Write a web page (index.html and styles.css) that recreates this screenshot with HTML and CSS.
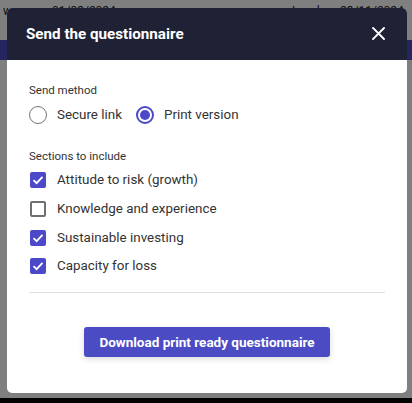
FILE: index.html
```html
<!DOCTYPE html>
<html lang="en">
<head>
<meta charset="utf-8">
<title>Send the questionnaire</title>
<link rel="stylesheet" href="styles.css">
</head>
<body>
<div class="page">
  <div class="bg-row">
    <span class="bg-cell c1">w</span>
    <span class="bg-cell c2">01/03/2024</span>
    <span class="bg-cell c3">Level</span>
    <span class="bg-cell c4">23/11/2024</span>
  </div>
  <div class="bg-bar"></div>
</div>
<div class="overlay"></div>
<div class="bottom-strip"></div>
<div class="modal" role="dialog" aria-labelledby="dlg-title">
  <div class="modal-header">
    <h2 id="dlg-title" class="modal-title">Send the questionnaire</h2>
    <button class="close-btn" aria-label="Close">
      <svg width="13" height="13" viewBox="0 0 13 13"><path d="M1 1L12 12M12 1L1 12" stroke="#ffffff" stroke-width="1.9" stroke-linecap="square"/></svg>
    </button>
  </div>
  <div class="modal-body">
    <div class="field-label">Send method</div>
    <div class="radio-row">
      <label class="radio"><span class="radio-dot"></span><span>Secure link</span></label>
      <label class="radio checked"><span class="radio-dot"></span><span>Print version</span></label>
    </div>
    <div class="field-label sections">Sections to include</div>
    <div class="checks">
      <label class="check checked"><span class="box"><svg width="12" height="10" viewBox="0 0 12 10"><path d="M1.5 5.2L4.6 8.2L10.5 1.8" fill="none" stroke="#fff" stroke-width="1.8"/></svg></span><span>Attitude to risk (growth)</span></label>
      <label class="check"><span class="box"></span><span>Knowledge and experience</span></label>
      <label class="check checked"><span class="box"><svg width="12" height="10" viewBox="0 0 12 10"><path d="M1.5 5.2L4.6 8.2L10.5 1.8" fill="none" stroke="#fff" stroke-width="1.8"/></svg></span><span>Sustainable investing</span></label>
      <label class="check checked"><span class="box"><svg width="12" height="10" viewBox="0 0 12 10"><path d="M1.5 5.2L4.6 8.2L10.5 1.8" fill="none" stroke="#fff" stroke-width="1.8"/></svg></span><span>Capacity for loss</span></label>
    </div>
    <hr class="divider">
    <div class="actions">
      <button class="primary-btn">Download print ready questionnaire</button>
    </div>
  </div>
</div>
</body>
</html>
```
FILE: styles.css
```css
* { box-sizing: border-box; }
html, body { margin: 0; padding: 0; }
body {
  width: 412px;
  height: 403px;
  overflow: hidden;
  position: relative;
  font-family: Roboto, "Liberation Sans", Arial, sans-serif;
  background: #ffffff;
}
.page {
  width: 412px;
  height: 403px;
}
.bg-row {
  height: 40px;
  font-size: 12px;
  color: #222;
  position: relative;
}
.bg-cell { position: absolute; top: 4px; }
.c1 { left: 3px; }
.c2 { left: 52px; }
.c3 { left: 292px; }
.c4 { left: 340px; }
.bg-bar {
  height: 20px;
  background: #4a4ac0;
}
.overlay {
  position: absolute;
  inset: 0;
  background: rgba(0, 0, 0, 0.5);
}
.bottom-strip {
  position: absolute;
  left: 0;
  right: 0;
  bottom: 0;
  height: 5px;
  background: #000;
}
.modal {
  position: absolute;
  left: 7px;
  top: 8px;
  width: 400px;
  height: 385px;
  background: #ffffff;
  border-radius: 5px;
  overflow: hidden;
  display: flex;
  flex-direction: column;
}
.modal-header {
  height: 52px;
  flex: none;
  background: #1f2235;
  display: flex;
  align-items: center;
  justify-content: space-between;
  padding: 0 22px 0 19px;
}
.modal-title {
  margin: 0;
  color: #ffffff;
  font-size: 15.2px;
  font-weight: 700;
}
.close-btn {
  background: none;
  border: 0;
  padding: 0;
  width: 13px;
  height: 13px;
  display: flex;
  cursor: pointer;
  margin-top: -2px;
}
.modal-body {
  padding: 22px 22px 0 22px;
  display: flex;
  flex-direction: column;
}
.field-label {
  font-size: 11.5px;
  line-height: 16px;
  color: #333333;
}
.field-label.sections { margin-top: 23px; }
.radio-row {
  display: flex;
  gap: 14px;
  margin-top: 7px;
}
.radio, .check {
  display: flex;
  align-items: center;
  gap: 10px;
  font-size: 13.4px;
  color: #333333;
  line-height: 20px;
}
.radio-dot {
  width: 18px;
  height: 18px;
  border-radius: 50%;
  border: 1.5px solid #757575;
  display: flex;
  align-items: center;
  justify-content: center;
}
.radio.checked .radio-dot {
  border: 2px solid #4c49c8;
}
.radio.checked .radio-dot::after {
  content: "";
  width: 10px;
  height: 10px;
  border-radius: 50%;
  background: #4c49c8;
}
.checks {
  display: flex;
  flex-direction: column;
  margin-top: 2px;
}
.check {
  height: 28.7px;
  padding-left: 1px;
  gap: 11px;
}
.box {
  width: 16px;
  height: 16px;
  border-radius: 2px;
  border: 2px solid #6f6f6f;
  display: flex;
  align-items: center;
  justify-content: center;
}
.check.checked .box {
  border: 0;
  background: #4c49c8;
}
.divider {
  border: 0;
  border-top: 1px solid #e0e0e0;
  margin: 11px 0 0 0;
}
.actions {
  display: flex;
  justify-content: center;
  margin-top: 34px;
}
.primary-btn {
  height: 30px;
  padding: 0 15px;
  background: #4b4bc4;
  color: #ffffff;
  border: 0;
  border-radius: 3px;
  font-family: inherit;
  font-size: 13.5px;
  font-weight: 700;
  box-shadow: 0 2px 6px rgba(0, 0, 0, 0.15);
}
```
